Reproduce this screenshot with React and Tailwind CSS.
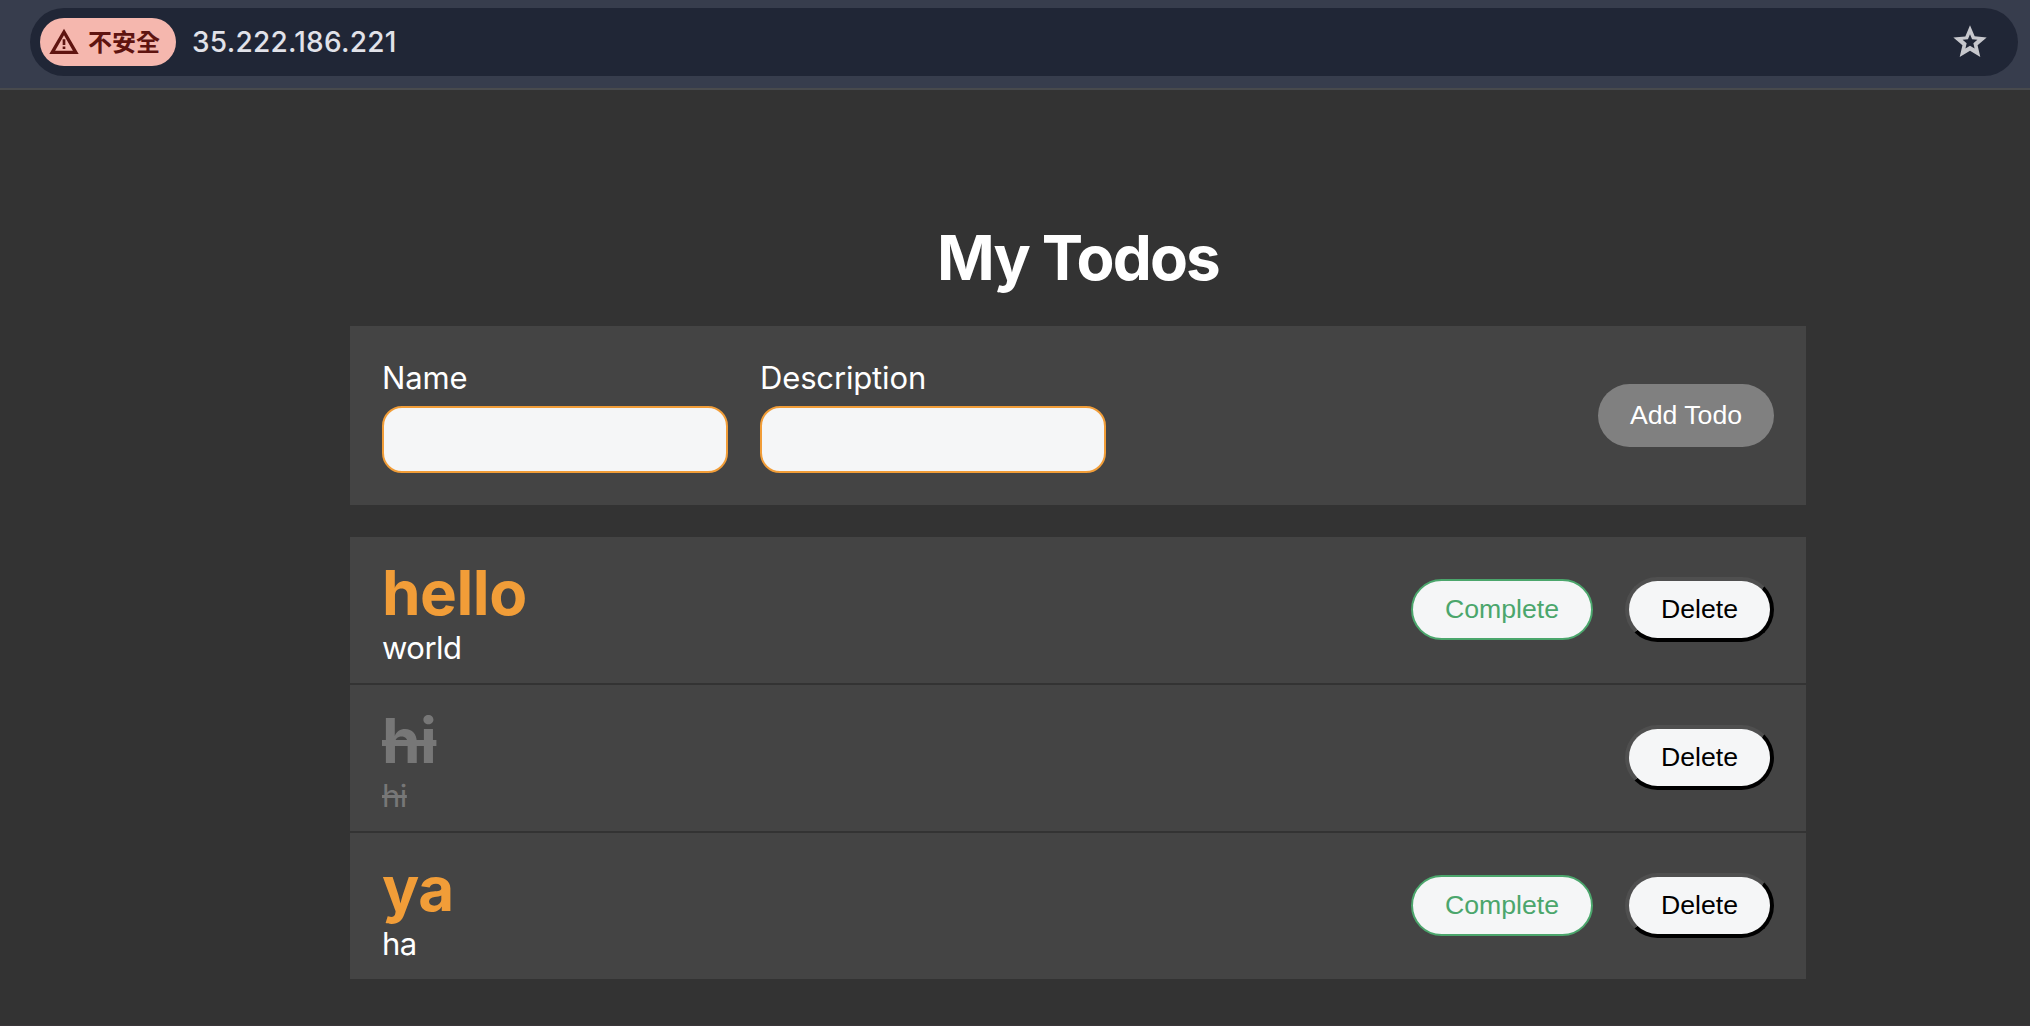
const todos = [
  { name: "hello", description: "world", done: false },
  { name: "hi", description: "hi", done: true },
  { name: "ya", description: "ha", done: false },
];

function AddressBar() {
  return (
    <header className="h-[90px] border-b-2 border-[#484a4d] bg-[#373d4d] pt-2 pr-3 pl-[30px]">
      <div className="flex h-[68px] items-center rounded-full bg-[#202636] pr-7 pl-2.5">
        <div className="flex h-12 w-[136px] items-center rounded-full bg-[#f5b7ae] pl-2 text-[#5f1410]">
          <svg viewBox="0 0 24 24" className="size-8 shrink-0 fill-current">
            <path fillRule="evenodd" d="M12 2L1 21h22L12 2zM12 7L18.66 18.5H5.34L12 7z" />
            <path d="M11 10h2v4.2h-2zM11 15.4h2v1.8h-2z" />
          </svg>
          <span className="ml-2 pb-[3px] font-['Noto_Sans_CJK_TC',sans-serif] text-[24px] leading-none font-bold whitespace-nowrap">不安全</span>
        </div>
        <span className="ml-4 text-[28px] leading-none font-medium tracking-[0.25px] text-[#e1e2e9]">35.222.186.221</span>
        <svg viewBox="0 0 24 24" className="ml-auto size-10 fill-[#c7c8cd]">
          <path fillRule="evenodd" d="M22 9.24l-7.19-.62L12 2 9.19 8.63 2 9.24l5.46 4.73L5.82 21 12 17.27 18.18 21l-1.63-7.03L22 9.24zM12 14.2L9.26 15.9 9.98 12.75 7.56 10.64 10.76 10.36 12 7.4 13.25 10.37 16.45 10.65 14.02 12.76 14.75 15.9z" />
        </svg>
      </div>
    </header>
  );
}

function Field({ label, id }) {
  return (
    <div className="w-[346px]">
      <label htmlFor={id} className="block h-12 text-[31px] leading-[40px] tracking-[-0.15px]">{label}</label>
      <input id={id} type="text" className="block h-[67px] w-full rounded-[20px] border-2 border-[#f19d38] bg-[#f5f6f7] px-4 text-black" />
    </div>
  );
}

function TodoRow({ todo }) {
  return (
    <li className="flex h-[146px] items-center justify-between bg-[#444] px-8">
      <div className={todo.done ? "text-[#777] line-through" : "text-white"}>
        <h2 className={todo.done ? "h-[76px] text-[62px] leading-[80px] font-bold tracking-[-0.5px]" : "h-[76px] text-[62px] leading-[80px] font-bold tracking-[-0.5px] text-[#f19d38]"}>{todo.name}</h2>
        <p className="text-[31px] leading-[38px] tracking-[-0.5px]">{todo.description}</p>
      </div>
      <div className="flex items-center gap-8 pb-px font-['Liberation_Sans',Arial,sans-serif] text-[26.67px]">
        {!todo.done && (
          <button className="h-[61px] w-[182px] rounded-full border-2 border-[#4ba66c] bg-[#f5f6f7] pb-px text-[#4ba66c]">Complete</button>
        )}
        <button className="h-[65px] w-[149px] rounded-full border-4 border-t-[#4f4f4f] border-r-black border-b-black border-l-[#4f4f4f] bg-[#f5f6f7] pb-px text-black">Delete</button>
      </div>
    </li>
  );
}

export default function App() {
  return (
    <div className="flex h-[1026px] flex-col border-b border-[#3a3639] bg-[#333] font-['Inter',sans-serif] text-white">
      <AddressBar />
      <main className="mx-auto mt-[129px] w-[1456px] translate-x-[63px]">
        <h1 className="h-[107px] text-center text-[62px] leading-[78px] font-bold tracking-[-1.85px]">My Todos</h1>
        <form className="flex h-[179px] items-center justify-between bg-[#444] px-8">
          <div className="flex gap-8">
            <Field label="Name" id="name" />
            <Field label="Description" id="description" />
          </div>
          <button type="button" className="h-[63px] w-[176px] rounded-full bg-[#808080] pb-0.5 font-['Liberation_Sans',Arial,sans-serif] text-[26.67px] text-white">Add Todo</button>
        </form>
        <ul className="mt-8 flex flex-col gap-0.5">
          {todos.map((todo) => (
            <TodoRow key={todo.name} todo={todo} />
          ))}
        </ul>
      </main>
    </div>
  );
}
